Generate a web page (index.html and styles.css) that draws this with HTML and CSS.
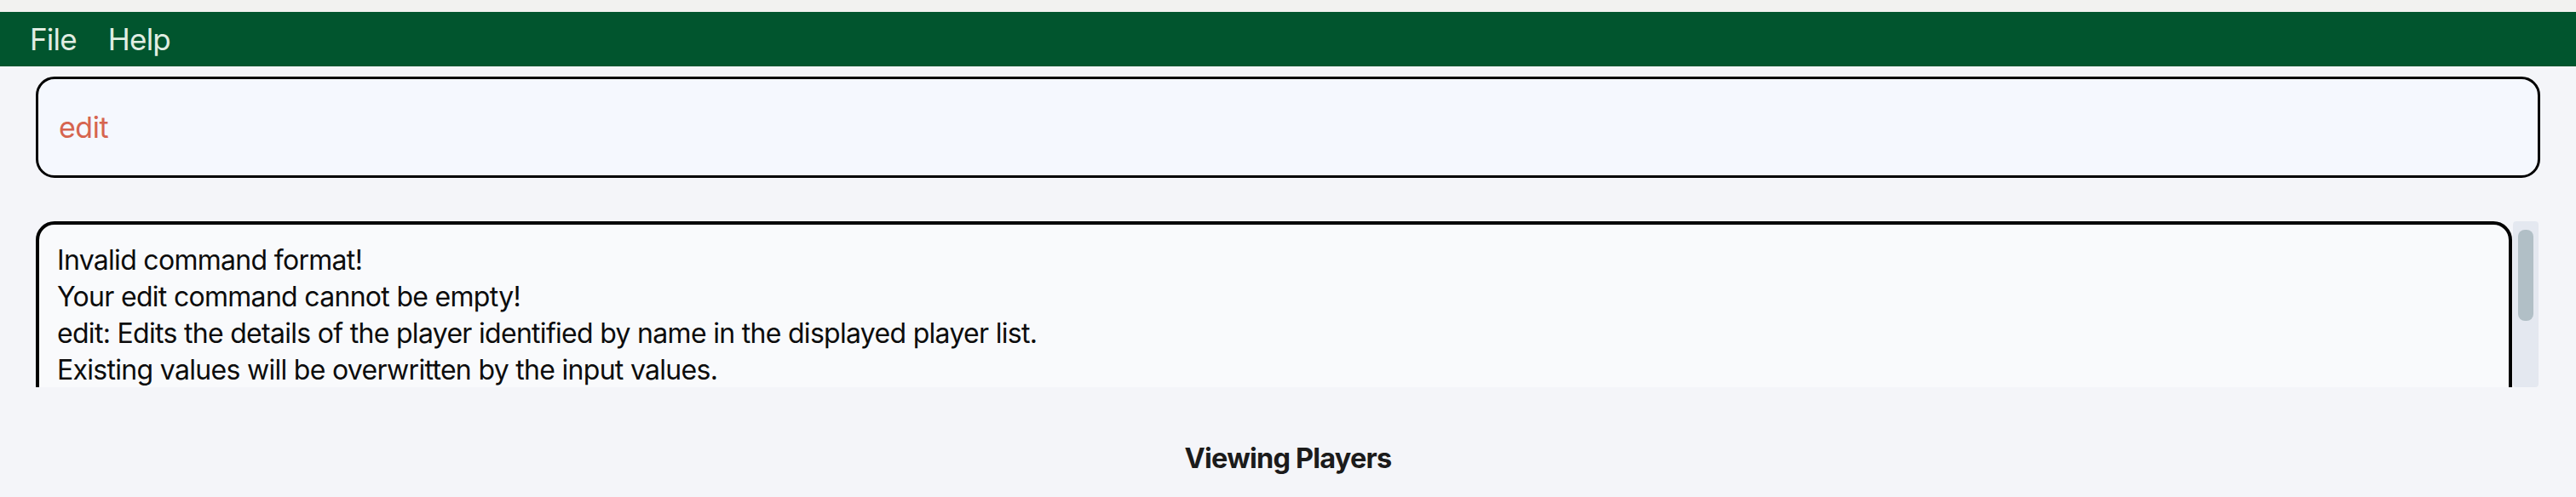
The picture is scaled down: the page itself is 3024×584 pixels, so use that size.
FILE: index.html
```html
<!DOCTYPE html>
<html lang="en">
<head>
<meta charset="utf-8">
<title>Players</title>
<link rel="stylesheet" href="styles.css">
</head>
<body>
<div class="app">
  <div class="top-strip"></div>
  <nav class="menubar">
    <span class="menu-item">File</span>
    <span class="menu-item">Help</span>
  </nav>
  <main class="content">
    <div class="command-box">
      <span class="command-text">edit</span>
    </div>
    <div class="result-pane">
      <div class="result-viewport">
        <div class="result-box">
          <p class="result-line">Invalid command format!</p>
          <p class="result-line">Your edit command cannot be empty!</p>
          <p class="result-line">edit: Edits the details of the player identified by name in the displayed player list.</p>
          <p class="result-line">Existing values will be overwritten by the input values.</p>
        </div>
      </div>
      <div class="scrollbar">
        <div class="scroll-thumb"></div>
      </div>
    </div>
    <div class="status">Viewing Players</div>
  </main>
</div>
</body>
</html>
```
FILE: styles.css
```css
* {
  box-sizing: border-box;
}

html, body {
  margin: 0;
  padding: 0;
}

body {
  width: 3024px;
  height: 584px;
  overflow: hidden;
  background: #f4f5f9;
  font-family: Inter, "Noto Sans", sans-serif;
}

.app {
  display: flex;
  flex-direction: column;
  height: 584px;
}

.top-strip {
  height: 14px;
  background: #f2f2f0;
}

.menubar {
  height: 64px;
  background: #01552e;
  display: flex;
  align-items: center;
  gap: 37px;
  padding-left: 35px;
}

.menu-item {
  color: #e1eee3;
  font-size: 35px;
  letter-spacing: -0.8px;
  line-height: 40px;
}

.content {
  flex: 1;
  display: flex;
  flex-direction: column;
  padding: 12px 42px 0 42px;
}

.command-box {
  height: 119px;
  border: 3.5px solid #000;
  border-radius: 22px;
  background: #f5f8fe;
  display: flex;
  align-items: center;
  padding-left: 24px;
}

.command-text {
  color: #d6654f;
  font-size: 34px;
  line-height: 40px;
  letter-spacing: -0.5px;
}

.result-pane {
  margin-top: 51px;
  height: 195px;
  display: flex;
  gap: 1px;
  padding-right: 2px;
}

.result-viewport {
  flex: 1;
  overflow: hidden;
}

.result-box {
  height: 300px;
  border: 4px solid #000;
  border-radius: 22px;
  background: #f9fafc;
  padding: 20px 21px;
}

.result-line {
  margin: 0;
  font-size: 32px;
  line-height: 43px;
  color: #0c0c0c;
  letter-spacing: -0.7px;
  white-space: nowrap;
}

.scrollbar {
  width: 30px;
  background: #e4e8f0;
  border-radius: 4px;
  padding: 10px 6px;
}

.scroll-thumb {
  height: 107px;
  background: #b1bfc6;
  border-radius: 8px;
}

.status {
  flex: 1;
  display: flex;
  justify-content: center;
  padding-top: 64px;
  font-size: 32.5px;
  font-weight: 700;
  letter-spacing: -0.8px;
  color: #1b1b1b;
  line-height: 40px;
}
```
